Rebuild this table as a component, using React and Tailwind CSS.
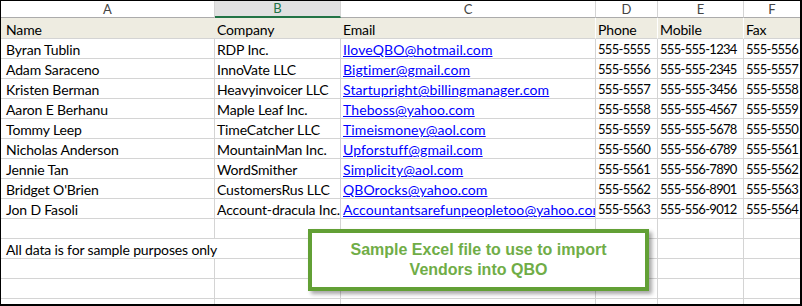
import React from "react";

const cols = ["A", "B", "C", "D", "E", "F"];

const people = [
  ["Byran Tublin", "RDP Inc.", "IloveQBO@hotmail.com", "555-5555", "555-555-1234", "555-5556"],
  ["Adam Saraceno", "InnoVate LLC", "Bigtimer@gmail.com", "555-5556", "555-555-2345", "555-5557"],
  ["Kristen Berman", "Heavyinvoicer LLC", "Startupright@billingmanager.com", "555-5557", "555-555-3456", "555-5558"],
  ["Aaron E Berhanu", "Maple Leaf Inc.", "Theboss@yahoo.com", "555-5558", "555-555-4567", "555-5559"],
  ["Tommy Leep", "TimeCatcher LLC", "Timeismoney@aol.com", "555-5559", "555-555-5678", "555-5550"],
  ["Nicholas Anderson", "MountainMan Inc.", "Upforstuff@gmail.com", "555-5560", "555-556-6789", "555-5561"],
  ["Jennie Tan", "WordSmither", "Simplicity@aol.com", "555-5561", "555-556-7890", "555-5562"],
  ["Bridget O'Brien", "CustomersRus LLC", "QBOrocks@yahoo.com", "555-5562", "555-556-8901", "555-5563"],
  ["Jon D Fasoli", "Account-dracula Inc.", "Accountantsarefunpeopletoo@yahoo.com", "555-5563", "555-556-9012", "555-5564"],
];

const grid = "grid grid-cols-[214px_126px_255px_62px_86px_56px]";
const cellText =
  "flex items-end overflow-hidden whitespace-nowrap leading-[15px] pb-px text-black";

function Cell({ i, children }) {
  const spacing =
    i >= 3 ? "text-[13px] tracking-[-0.7px]" : i === 2 ? "tracking-[0.1px]" : "tracking-[-0.15px]";
  return (
    <div
      className={`${cellText} h-[20px] border-b border-[#d4d4d4] ${i < 5 ? "border-r" : ""} ${
        i === 0 ? "pl-[5px]" : "pl-[2px]"
      } ${spacing}`}
    >
      {i === 2 ? (
        <span className="text-[#0000ff] underline underline-offset-[1px]">{children}</span>
      ) : (
        children
      )}
    </div>
  );
}

function EmptyRow({ h = "h-[20px]", last = false }) {
  return (
    <div className={grid}>
      {cols.map((c, i) => (
        <div
          key={c}
          className={`${h} border-[#d4d4d4] ${last ? "" : "border-b"} ${i < 5 ? "border-r" : ""}`}
        />
      ))}
    </div>
  );
}

export default function App() {
  return (
    <div
      className="relative w-[802px] h-[306px] overflow-hidden bg-white border-black border-t border-l border-r-2 border-b-2 text-[14px]"
      style={{ fontFamily: "Lato, 'Open Sans', sans-serif" }}
    >
      {/* column letters */}
      <div className={grid}>
        {cols.map((c, i) => (
          <div
            key={c}
            className={`h-[17px] flex items-center justify-center leading-none text-[13px] ${
              c === "B"
                ? "bg-[#e1e1e1] text-[#217346] border-b-2 border-[#217346]"
                : "text-[#444444] border-b border-[#ababab]"
            } ${i < 5 ? "border-r border-r-[#d4d4d4]" : ""}`}
          >
            {c}
          </div>
        ))}
      </div>

      {/* field names */}
      <div className={`${grid} bg-[#eeece1]`}>
        {["Name", "Company", "Email", "Phone", "Mobile", "Fax"].map((t, i) => (
          <div
            key={t}
            className={`${cellText} h-[21px] border-b border-[#d4d4d4] tracking-[-0.15px] ${
              i === 0 ? "pl-[5px]" : "pl-[2px]"
            } ${i >= 2 && i < 5 ? "border-r border-r-white" : ""}`}
          >
            {t}
          </div>
        ))}
      </div>

      {/* vendor rows */}
      {people.map((p) => (
        <div key={p[0]} className={grid}>
          {p.map((v, i) => (
            <Cell key={i} i={i}>
              {v}
            </Cell>
          ))}
        </div>
      ))}

      <EmptyRow />

      {/* note spills across A and B */}
      <div className={grid}>
        <div
          className={`${cellText} col-span-2 h-[20px] border-b border-r border-[#d4d4d4] pl-[5px] tracking-[-0.15px]`}
        >
          All data is for sample purposes only
        </div>
        {[2, 3, 4, 5].map((i) => (
          <div key={i} className={`h-[20px] border-b border-[#d4d4d4] ${i < 5 ? "border-r" : ""}`} />
        ))}
      </div>

      <EmptyRow />
      <EmptyRow />
      <EmptyRow h="h-[5px]" last />

      {/* floating text box */}
      <div
        className="absolute left-[307px] top-[228px] w-[341px] h-[62px] bg-white border-4 border-[#62a035] shadow-[3px_3px_4px_rgba(0,0,0,0.35)] pt-[7px] text-center text-[16px] font-bold leading-[20px] text-[#70ad47]"
        style={{ fontFamily: "'Liberation Sans', Arial, sans-serif" }}
      >
        Sample Excel file to use to import
        <br />
        Vendors into QBO
      </div>
    </div>
  );
}
